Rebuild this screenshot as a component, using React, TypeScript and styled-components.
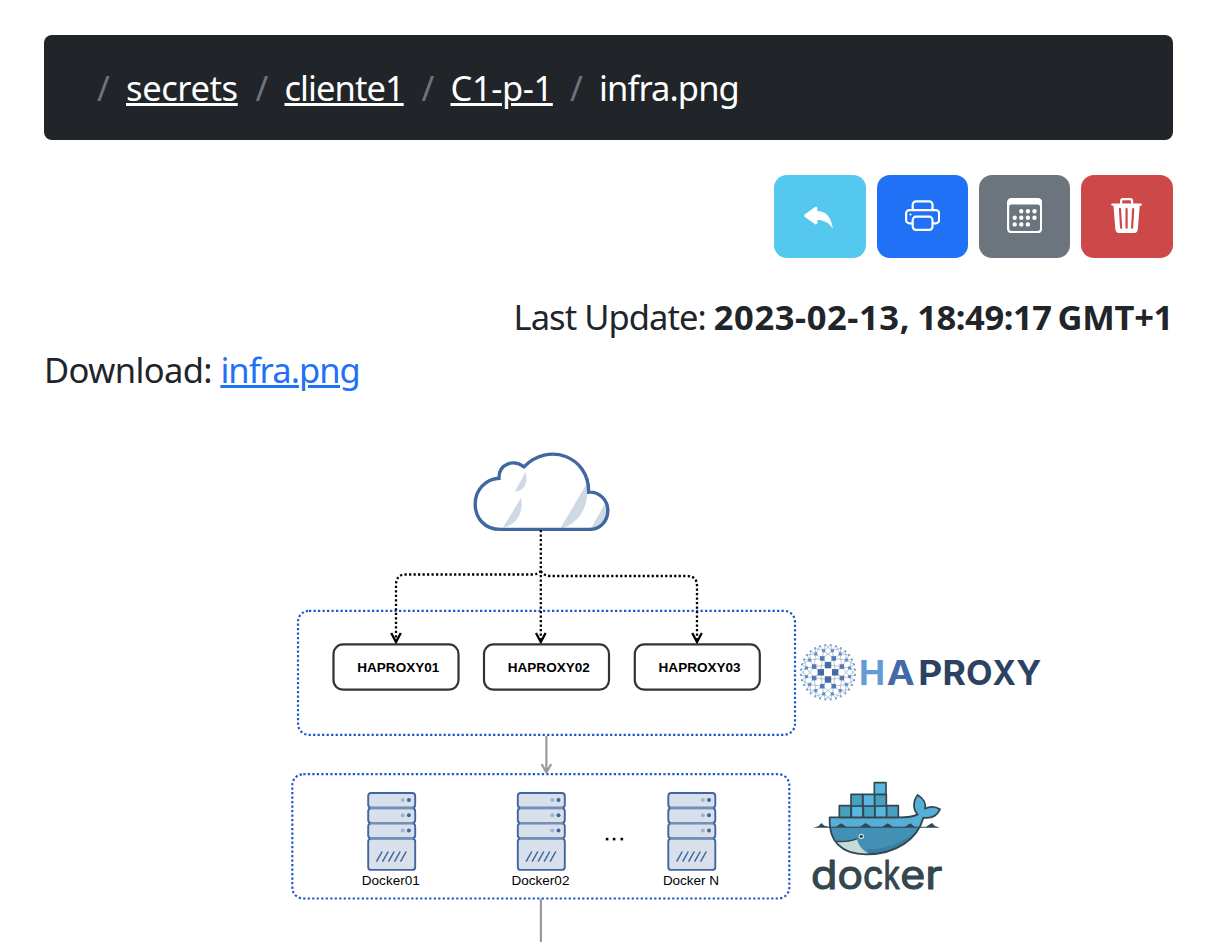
import React from 'react';
import styled, { createGlobalStyle } from 'styled-components';
import { BsReplyFill, BsPrinter, BsCalendar3, BsTrash3Fill } from 'react-icons/bs';

const GlobalStyle = createGlobalStyle`
  *, *::before, *::after { box-sizing: border-box; }
  body {
    margin: 0;
    background: #fff;
    color: #212529;
    font: 400 34.5px/53px 'Noto Sans', 'Open Sans', sans-serif;
    overflow: hidden;
  }
`;

const Page = styled.main`
  width: 1221px;
  height: 942px;
  padding: 35px 48px 0 44px;
  overflow: hidden;
`;

const Breadcrumb = styled.nav`
  display: flex;
  align-items: center;
  height: 105px;
  padding: 0 53px 1px;
  border-radius: 8px;
  background: #212529;
  color: #fff;
`;

const Slash = styled.span`
  width: 11px;
  margin-right: 18px;
  color: #6c757d;
`;

const Crumb = styled.a<{ $width: number; $tracking: number }>`
  width: ${(p) => p.$width}px;
  margin-right: 18px;
  color: #fff;
  letter-spacing: ${(p) => p.$tracking}px;
  white-space: nowrap;
  text-decoration-line: underline;
  text-decoration-thickness: 3px;
  text-underline-offset: 2px;
`;

const Current = styled.span`
  letter-spacing: -0.9px;
  white-space: nowrap;
`;

const Toolbar = styled.div`
  display: flex;
  justify-content: flex-end;
  gap: 11px;
  margin-top: 35px;
`;

const ToolButton = styled.button<{ $color: string; $wide?: boolean }>`
  display: flex;
  align-items: center;
  justify-content: center;
  width: ${(p) => (p.$wide ? 92 : 91)}px;
  height: 83px;
  padding: 0 0 2px;
  border: 0;
  border-radius: 13px;
  background: ${(p) => p.$color};
  color: #fff;
  font-size: 35.2px;
`;

const Updated = styled.div`
  margin-top: 32px;
  letter-spacing: -0.95px;
  text-align: right;
  white-space: nowrap;
`;

const Stamp = styled.strong<{ $tracking: number }>`
  letter-spacing: ${(p) => p.$tracking}px;
  word-spacing: -2.4px;
`;

const Download = styled.div`
  letter-spacing: -0.6px;
  white-space: nowrap;
`;

const FileLink = styled.a`
  color: #2171f7;
  letter-spacing: -0.95px;
  text-decoration-line: underline;
  text-decoration-thickness: 3px;
  text-underline-offset: 2px;
`;

const Diagram = styled.svg`
  display: block;
  margin: 44px 0 0 236px;
`;

const CX = 828;
const CY = 672.3;
const polar = (r: number, deg: number) => {
  const a = (deg * Math.PI) / 180;
  return [CX + r * Math.cos(a), CY + r * Math.sin(a)] as const;
};
const ring = (n: number, r: number, offset: number) =>
  Array.from({ length: n }, (_, i) => polar(r, offset + (360 / n) * i));

const rings = [
  { nodes: ring(4, 7.2, 0), size: 6.4, fill: '#426ba8' },
  { nodes: ring(8, 15, 22.5), size: 4.6, fill: '#5279b8' },
  { nodes: ring(16, 22, 11.25), size: 3.1, fill: '#5c90cf' },
  { nodes: ring(32, 27.3, 5.625), size: 1.9, fill: '#68a1d8' },
];

const links = rings.slice(0, 3).flatMap((level, i) =>
  level.nodes.flatMap((from) =>
    [...rings[i + 1].nodes]
      .sort((a, b) => Math.hypot(a[0] - from[0], a[1] - from[1]) - Math.hypot(b[0] - from[0], b[1] - from[1]))
      .slice(0, 4)
      .map((to) => [from, to] as const),
  ),
);

type Letter = [char: string, x: number, width: number, fill: string];

const haproxyLetters: Letter[] = [
  ['H', 859, 26, '#659bd5'],
  ['A', 886.8, 28, '#426ba5'],
  ['P', 918.3, 24, '#2b4263'],
  ['R', 942.6, 23.4, '#2b4263'],
  ['O', 966, 26.6, '#2b4263'],
  ['X', 992.6, 23.4, '#2b4263'],
  ['Y', 1016.2, 25, '#2b4263'],
];

const dockerLetters: Letter[] = [
  ['d', 810.9, 26.4, '#34474e'],
  ['o', 837.4, 25.5, '#34474e'],
  ['c', 863, 20.5, '#34474e'],
  ['k', 883.6, 16.5, '#34474e'],
  ['e', 900.2, 25, '#34474e'],
  ['r', 925.3, 17, '#34474e'],
];

const Wordmark = ({ letters, y }: { letters: Letter[]; y: number }) => (
  <>
    {letters.map(([char, x, width, fill]) => (
      <text key={x} x={x} y={y} textLength={width} lengthAdjust="spacingAndGlyphs" fill={fill}>
        {char}
      </text>
    ))}
  </>
);

const HaproxyLogo = () => (
  <g>
    {links.map(([a, b], i) => (
      <line key={i} x1={a[0]} y1={a[1]} x2={b[0]} y2={b[1]} stroke="#7f8fa8" strokeWidth=".5" />
    ))}
    {rings.map((r) =>
      r.nodes.map(([x, y], i) => (
        <rect key={`${r.size}-${i}`} x={x - r.size / 2} y={y - r.size / 2} width={r.size} height={r.size} fill={r.fill} />
      )),
    )}
    <g fontFamily="Inter, sans-serif" fontWeight="700" fontSize="34.5">
      <Wordmark letters={haproxyLetters} y={685} />
    </g>
  </g>
);

const crates: [number, number, string][] = [
  [118, 107, '#48a0c0'], [154, 107, '#58b7df'], [190, 107, '#48a0c0'], [225, 107, '#58b7df'], [260, 107, '#48a0c0'],
  [153, 73, '#48a0c0'], [189, 73, '#58b7df'], [224, 73, '#48a0c0'],
  [223, 38, '#58b7df'],
];

const whale =
  'M89 142H285C315 143 340 140 353 133C339 119 338 94 353 75C371 86 379 102 375 116C391 108 408 110 420 118C411 137 392 146 370 143C354 204 292 253 198 253C125 253 85 215 89 142Z';

const DockerLogo = () => (
  <g>
    <g transform="translate(800 770) scale(.33333)" stroke="#34474e" strokeWidth="5.5" strokeLinejoin="round">
      <clipPath id="whale"><path d={whale} /></clipPath>
      <g clipPath="url(#whale)" stroke="none">
        <rect x="80" y="70" width="350" height="190" fill="#55afd9" />
        <rect x="80" y="170" width="350" height="90" fill="#4291b5" />
        <path d="M365 170C330 205 270 238 200 238L210 256H380Z" fill="#3b7ea5" />
        <path d="M105 214C132 217 157 214 171 207C174 224 187 240 207 252L160 256Z" fill="#c5dcd9" />
      </g>
      <path d={whale} fill="none" />
      <path d="M109 214C136 216 158 212 171 206" fill="none" strokeWidth="4" />
      <path d="M40 173L56 168L64 159L73 167L87 170H108L123 160L139 170H180L197 159L214 170H247L263 160L279 170H315L331 160L344 170H378L396 159L405 168L420 173Z" fill="#34474e" stroke="none" />
      {crates.map(([x, y, fill]) => (
        <rect key={`${x}-${y}`} x={x} y={y} width="35" height="35" fill={fill} strokeWidth="5" />
      ))}
      <circle cx="184" cy="199" r="8" fill="#dce8e6" stroke="none" />
      <circle cx="184" cy="199" r="5" fill="#34474e" stroke="none" />
    </g>
    <g
      fontFamily="Inter, sans-serif"
      fontSize="39"
      fontWeight="400"
      stroke="#34474e"
      strokeWidth="1.1"
      strokeLinejoin="round"
    >
      <Wordmark letters={dockerLetters} y={889.2} />
    </g>
  </g>
);

const Arrow = ({ d, tip }: { d: string; tip: [number, number] }) => (
  <g fill="none" stroke="#000" strokeWidth="2.3">
    <path d={d} strokeDasharray="2.25 2.25" />
    <path d={`M${tip[0] - 4.8} ${tip[1] - 9}L${tip[0]} ${tip[1]}L${tip[0] + 4.8} ${tip[1] - 9}`} />
  </g>
);

const ProxyNode = ({ x, label }: { x: number; label: string }) => (
  <g>
    <rect x={x} y="644.4" width="125" height="45.3" rx="9.5" fill="#fff" stroke="#333" strokeWidth="2.2" />
    <text x={x + 64.8} y="671.5" textAnchor="middle" textLength="82" fontSize="13.5" fontWeight="700">
      {label}
    </text>
  </g>
);

const Server = ({ x, label, width }: { x: number; label: string; width: number }) => (
  <g>
    <g fill="#d8e0eb" stroke="#41659f" strokeWidth="1.9">
      {[793, 808.2, 823.4].map((y) => (
        <rect key={y} x={x} y={y} width="47" height="14.8" rx="3" />
      ))}
      <rect x={x} y="838.6" width="47" height="31.3" rx="3" />
    </g>
    {[807.9, 823.1, 838.3].map((y) => (
      <path key={y} d={`M${x + 2} ${y}h43`} stroke="#7390b9" strokeWidth="2.4" />
    ))}
    {[800, 815.2, 830.4].map((y) => (
      <g key={y}>
        <circle cx={x + 34.5} cy={y} r="2" fill="#9fb2cf" />
        <circle cx={x + 40.7} cy={y} r="2" fill="#41659f" />
      </g>
    ))}
    <path
      d={[0, 1, 2, 3, 4].map((i) => `M${x + 8.3 + i * 6} 861.7L${x + 14 + i * 6} 851.5`).join('')}
      stroke="#41659f"
      strokeWidth="1.5"
    />
    <text x={x + 22.6} y="885.2" textAnchor="middle" textLength={width} fontSize="13.5">
      {label}
    </text>
  </g>
);

const InfraDiagram = () => (
  <Diagram width="780" height="502" viewBox="280 440 780 502" fontFamily="'Liberation Sans', Arial, sans-serif">
    <g fill="none" stroke="#1f57cc" strokeWidth="2.2" strokeDasharray="2.25 2.25">
      <rect x="298" y="610.8" width="497" height="124" rx="11" />
      <rect x="292.3" y="774.2" width="497" height="124.3" rx="11" />
    </g>

    <clipPath id="cloud">
      <path d="M500 529C484 529 475 518 475 504C475 489 486 478 499 478C499 462 514 458 524 466C548 440 589 457 589 492C600 491 608 500 608 510C608 522 600 529 590 529Z" />
    </clipPath>
    <g clipPath="url(#cloud)" fill="#cfd9e6">
      <path d="M525.5 472C528 480 526 491 515 491.5Z" />
      <path d="M521 498C524 510 518 525 503 527.5Z" />
      <path d="M586.5 484C590 504 581 523 560 529Z" />
      <path d="M607 500L590 530H610Z" />
    </g>
    <path
      d="M500.5 529.4C484 529.4 475.2 517.5 475.2 504C475.2 490 485.5 479 499 478.3C498.5 463.5 514 459 524 466.8C548 441.7 589.5 456 588.6 492.2C600 491.5 607.8 500.5 607.8 510.5C607.8 521.5 600 529.4 589.5 529.4Z"
      fill="none"
      stroke="#4167a1"
      strokeWidth="3.4"
    />

    <Arrow d="M540.8 530V642" tip={[540.8, 642]} />
    <Arrow d="M540.8 571Q538.5 574.5 532 574.5H406Q396 574.5 396 585V642" tip={[396, 642]} />
    <Arrow d="M540.8 571Q544 576 550 576H687Q697 576 697 586V642" tip={[697, 642]} />

    <ProxyNode x={333.5} label="HAPROXY01" />
    <ProxyNode x={484} label="HAPROXY02" />
    <ProxyNode x={634.8} label="HAPROXY03" />

    <g fill="none" stroke="#999" strokeWidth="2.2">
      <path d="M546.4 736V772M541.6 764L546.4 772.5L551.2 764" />
      <path d="M540.9 899V942" />
    </g>

    <Server x={368.2} label="Docker01" width={58} />
    <Server x={517.8} label="Docker02" width={58} />
    <Server x={668.3} label="Docker N" width={56} />
    <g>
      <rect x="605.8" y="837.8" width="2.6" height="2.6" />
      <rect x="612.8" y="837.8" width="2.6" height="2.6" />
      <rect x="620.5" y="837.8" width="2.6" height="2.6" />
    </g>

    <HaproxyLogo />
    <DockerLogo />
  </Diagram>
);

export default function App() {
  return (
    <Page>
      <GlobalStyle />
      <Breadcrumb>
        <Slash>/</Slash>
        <Crumb $width={111.5} $tracking={-0.4}>secrets</Crumb>
        <Slash>/</Slash>
        <Crumb $width={119} $tracking={-0.95}>cliente1</Crumb>
        <Slash>/</Slash>
        <Crumb $width={101.5} $tracking={-0.4}>C1-p-1</Crumb>
        <Slash>/</Slash>
        <Current>infra.png</Current>
      </Breadcrumb>
      <Toolbar>
        <ToolButton $color="#54c8ee" $wide aria-label="Back"><BsReplyFill /></ToolButton>
        <ToolButton $color="#2171f7" aria-label="Print"><BsPrinter /></ToolButton>
        <ToolButton $color="#6c757d" aria-label="Calendar"><BsCalendar3 /></ToolButton>
        <ToolButton $color="#cd4848" $wide aria-label="Delete"><BsTrash3Fill /></ToolButton>
      </Toolbar>
      <Updated>
        Last Update: <Stamp $tracking={0.6}>2023-02-13, </Stamp>
        <Stamp $tracking={-0.45}>18:49:17 </Stamp>
        <Stamp $tracking={-0.3}>GMT+1</Stamp>
      </Updated>
      <Download>Download: <FileLink>infra.png</FileLink></Download>
      <InfraDiagram />
    </Page>
  );
}
